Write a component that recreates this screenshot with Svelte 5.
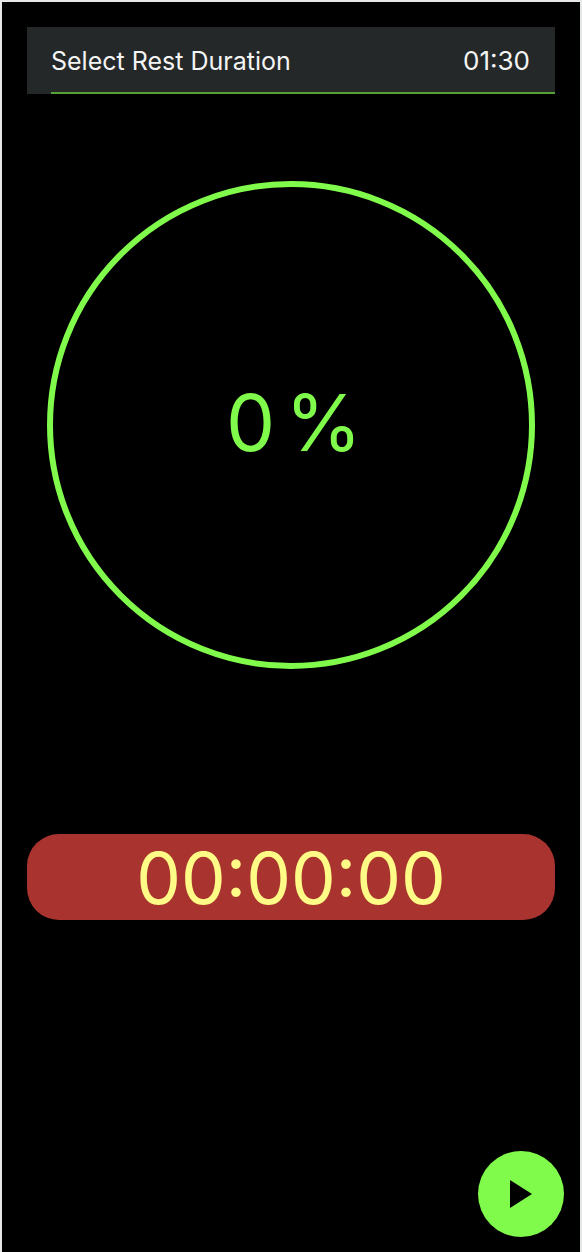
<script>
  let percent = $state(0);
  let elapsed = $state(0);
  let running = $state(false);
  let rest = $state('01:30');

  const pad = (n) => String(n).padStart(2, '0');
  let clock = $derived(
    `${pad(Math.floor(elapsed / 6000))}:${pad(Math.floor(elapsed / 100) % 60)}:${pad(elapsed % 100)}`
  );
</script>

<main>
  <label class="duration">
    <span>Select Rest Duration</span>
    <input type="text" bind:value={rest} />
  </label>

  <div class="progress">
    <svg viewBox="0 0 488 488" aria-hidden="true">
      <circle cx="244" cy="244" r="241" />
    </svg>
    <div class="percent"><span>{percent}</span><span>%</span></div>
  </div>

  <div class="clock">{clock}</div>

  <button class="play" aria-label="Start timer" aria-pressed={running} onclick={() => (running = !running)}>
    <svg viewBox="0 0 86 86" aria-hidden="true"><path d="M32 29v28l22-14z" /></svg>
  </button>
</main>

<style>
  :global(body) {
    background: #000;
  }
  main {
    box-sizing: border-box;
    display: flex;
    flex-direction: column;
    min-height: 100vh;
    padding: 25px 25px 0;
    border: solid #e6e8e8;
    border-width: 2px 2px 0;
    background: #000;
    font-family: Inter, sans-serif;
  }
  .duration {
    display: flex;
    align-items: center;
    justify-content: space-between;
    height: 67px;
    padding: 0 25px 0 24px;
    background: linear-gradient(#57a038, #57a038) 24px 100% / 100% 2px no-repeat #242829;
    color: #f4f4f4;
    font-size: 25px;
  }
  input {
    width: 96px;
    padding: 0;
    border: 0;
    background: none;
    color: inherit;
    font: inherit;
    font-size: 26px;
    text-align: right;
  }
  .progress {
    display: grid;
    place-items: center;
    margin: 87px 20px 0;
  }
  .progress > * {
    grid-area: 1 / 1;
  }
  .progress svg {
    display: block;
    width: 100%;
  }
  circle {
    fill: none;
    stroke: #80fb4c;
    stroke-width: 6;
  }
  .percent {
    display: flex;
    gap: 10px;
    padding: 0 0 4px 6px;
    color: #80fb4c;
    font-size: 78px;
    font-weight: 400;
    line-height: 96px;
  }
  .clock {
    margin-top: 165px;
    padding-top: 2px;
    border-radius: 32px;
    background: #a9342f;
    color: #fffb87;
    font-size: 71px;
    line-height: 84px;
    text-align: center;
  }
  .play {
    width: 86px;
    height: 86px;
    margin: auto -9px 15px auto;
    padding: 0;
    border: 0;
    border-radius: 50%;
    background: #80fb4c;
  }
  .play svg {
    display: block;
  }
</style>
